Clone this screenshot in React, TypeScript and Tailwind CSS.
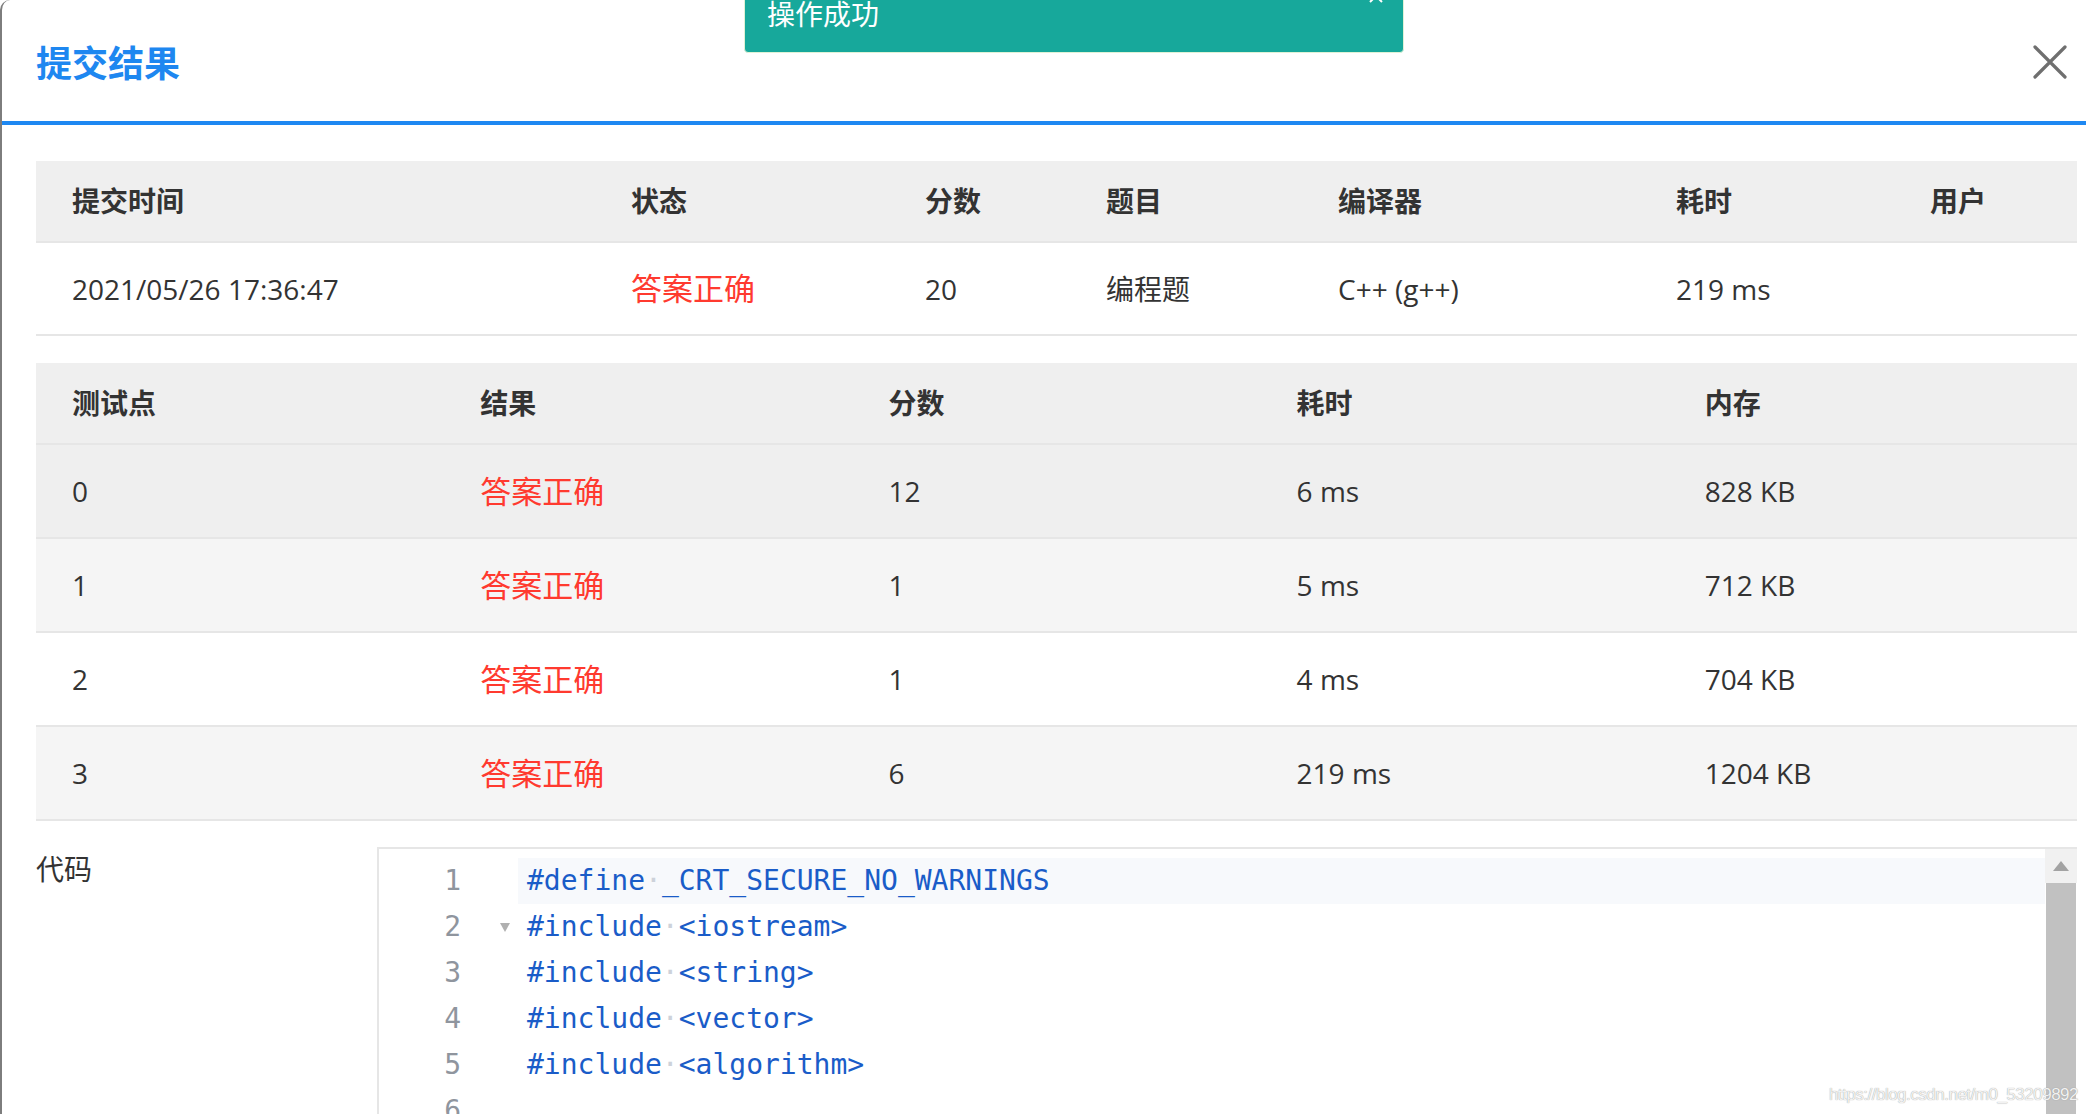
const summaryCols = ["提交时间", "状态", "分数", "题目", "编译器", "耗时", "用户"];

const summary = {
  time: "2021/05/26 17:36:47",
  status: "答案正确",
  score: "20",
  problem: "编程题",
  compiler: "C++ (g++)",
  cost: "219 ms",
  user: "",
};

const cases = [
  { id: "0", score: "12", cost: "6 ms", mem: "828 KB", bg: "bg-[#efefef]" },
  { id: "1", score: "1", cost: "5 ms", mem: "712 KB", bg: "bg-[#f5f5f5]" },
  { id: "2", score: "1", cost: "4 ms", mem: "704 KB", bg: "bg-white" },
  { id: "3", score: "6", cost: "219 ms", mem: "1204 KB", bg: "bg-[#f5f5f5]" },
];

const code = [
  ["#define", "_CRT_SECURE_NO_WARNINGS"],
  ["#include", "<iostream>"],
  ["#include", "<string>"],
  ["#include", "<vector>"],
  ["#include", "<algorithm>"],
  null,
];

function CodeEditor() {
  return (
    <div className="flex-1 h-[300px] flex border-t-2 border-l-2 border-[#e6e6e6] font-['DejaVu_Sans_Mono',monospace] text-[28px] leading-[46px]">
      {/* gutter */}
      <div className="w-[139px] pt-[9px] flex flex-col">
        {code.map((_, i) => (
          <div key={i} className="h-[46px] shrink-0 flex items-center">
            <span className="w-[82px] text-right text-[#8f959e]">{i + 1}</span>
            <span className="w-[57px] flex pl-[39px]">
              {i === 1 && (
                <svg width="10" height="10" viewBox="0 0 10 10">
                  <path d="M0 1 L10 1 L5 10 Z" fill="#b0b0b0" />
                </svg>
              )}
            </span>
          </div>
        ))}
      </div>
      {/* code */}
      <div className="flex-1 pt-[9px] flex flex-col">
        {code.map((line, i) => (
          <div key={i} className={`h-[46px] shrink-0 pl-[9px] whitespace-pre text-[#1a5cc8] ${i === 0 ? "bg-[#f7f9fc]" : ""}`}>
            {line && (
              <>
                {line[0]}
                <span className="text-[#cdd2da]">·</span>
                {line[1]}
              </>
            )}
          </div>
        ))}
      </div>
      {/* scrollbar */}
      <div className="w-[32px] flex flex-col">
        <div className="h-[34px] shrink-0 bg-[#f1f1f1] flex items-center justify-center">
          <svg width="16" height="10" viewBox="0 0 16 10">
            <path d="M8 0 L16 10 L0 10 Z" fill="#a3a3a3" />
          </svg>
        </div>
        <div className="flex-1 bg-[#c1c1c1] mx-[1px]" />
      </div>
    </div>
  );
}

export default function App() {
  return (
    <div className="relative w-full h-[1114px] overflow-hidden bg-white font-['Open_Sans','Noto_Sans_CJK_SC',sans-serif] text-[#333]">
      <div className="h-full border-l-2 border-[#7d7d7d] rounded-tl-[10px] flex flex-col">
        {/* header */}
        <div className="h-[121px] shrink-0 flex items-center justify-between pl-[34px] pr-[19px]">
          <h1 className="text-[36px] leading-[36px] font-bold text-[#1e87f0] font-['Noto_Sans_CJK_SC',sans-serif]">提交结果</h1>
          <svg width="34" height="34" viewBox="0 0 34 34" className="mt-[2px]">
            <path d="M2 2 L32 32 M32 2 L2 32" stroke="#6f6f6f" strokeWidth="3.2" strokeLinecap="round" />
          </svg>
        </div>
        <div className="h-[4px] shrink-0 bg-[#1e88f2]" />

        {/* body */}
        <div className="shrink-0 pl-[34px] pr-[9px] pt-[36px] text-[28px]">
          {/* summary table */}
          <div className="grid grid-cols-[559px_294px_181px_232px_338px_254px_1fr]">
            {summaryCols.map((c) => (
              <div key={c} className="h-[82px] bg-[#efefef] border-b-2 border-[#e6e6e6] flex items-center pl-[36px] font-bold">
                {c}
              </div>
            ))}
            {[summary.time, summary.status, summary.score, summary.problem, summary.compiler, summary.cost, summary.user].map((v, i) => (
              <div key={i} className={`h-[93px] border-b-2 border-[#e6e6e6] flex items-center pl-[36px] ${i === 1 ? "text-[#ff3a2f] text-[31px]" : ""}`}>
                {v}
              </div>
            ))}
          </div>

          {/* test points */}
          <div className="mt-[27px] grid grid-cols-5">
            {["测试点", "结果", "分数", "耗时", "内存"].map((c) => (
              <div key={c} className="h-[82px] bg-[#efefef] border-b-2 border-[#e6e6e6] flex items-center pl-[36px] font-bold">
                {c}
              </div>
            ))}
            {cases.map((r) => (
              <div key={r.id} className="contents">
                <div className={`h-[94px] border-b-2 border-[#e6e6e6] flex items-center pl-[36px] ${r.bg}`}>{r.id}</div>
                <div className={`h-[94px] border-b-2 border-[#e6e6e6] flex items-center pl-[36px] text-[#ff3a2f] text-[31px] ${r.bg}`}>答案正确</div>
                <div className={`h-[94px] border-b-2 border-[#e6e6e6] flex items-center pl-[36px] ${r.bg}`}>{r.score}</div>
                <div className={`h-[94px] border-b-2 border-[#e6e6e6] flex items-center pl-[36px] ${r.bg}`}>{r.cost}</div>
                <div className={`h-[94px] border-b-2 border-[#e6e6e6] flex items-center pl-[36px] ${r.bg}`}>{r.mem}</div>
              </div>
            ))}
          </div>

          {/* code */}
          <div className="mt-[26px] flex">
            <div className="w-[341px] pt-[8px] leading-[28px]">代码</div>
            <CodeEditor />
          </div>
        </div>
      </div>

      {/* toast */}
      <div className="absolute left-[744px] top-[-20px] w-[660px] h-[73px] bg-[#17a89b] rounded-[4px] border border-[#dff2d6] pl-[22px] pt-[18px]">
        <span className="text-white text-[28px] leading-[28px] font-['Noto_Sans_CJK_SC',sans-serif]">操作成功</span>
        <svg width="14" height="14" viewBox="0 0 14 14" className="absolute right-[20px] top-[8px]">
          <path d="M1 1 L13 13 M13 1 L1 13" stroke="#ffffff" strokeWidth="2" />
        </svg>
      </div>

      {/* watermark */}
      <div className="absolute right-[8px] bottom-[10px] text-[17px] leading-[18px] tracking-[-0.5px] text-[#f2f2f2] font-['Liberation_Sans',sans-serif] [text-shadow:0_0_1px_#8a8a8a]">
        https://blog.csdn.net/m0_53209892
      </div>
    </div>
  );
}
